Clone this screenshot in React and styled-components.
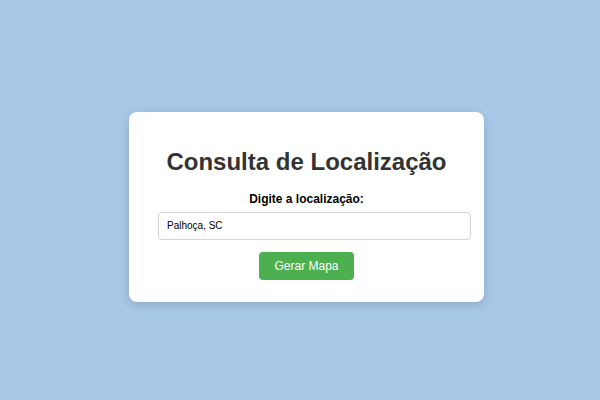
import styled, { createGlobalStyle } from "styled-components";

const GlobalStyle = createGlobalStyle`
    html, body {
        margin: 0;
        height: 100%;
        overflow: hidden;
    }
    body {
        background: #a7c7e7;
        font-family: "Liberation Sans", Arial, sans-serif;
    }
    #root {
        height: 100%;
    }
`;

const Page = styled.div`
    display: flex;
    align-items: center;
    justify-content: center;
    height: 100%;
    padding: 13px 0 0 13px;
    box-sizing: border-box;
`;

const Card = styled.div`
    width: 295px;
    padding: 20px 30px 22px;
    background: #fff;
    border-radius: 8px;
    box-shadow: 0 3px 10px rgba(0, 0, 0, 0.14);
    text-align: center;
`;

const Title = styled.h1`
    margin: 16px 0;
    font-size: 24px;
    color: #333;
`;

const Label = styled.label`
    display: block;
    margin-bottom: 6px;
    font-size: 12px;
    font-weight: bold;
    color: #000;
`;

const Input = styled.input`
    display: block;
    width: 100%;
    height: 26px;
    padding: 0 8px;
    margin: 0 0 12px -1px;
    border: 1px solid #d4d4d4;
    border-radius: 4px;
    font-family: inherit;
    font-size: 10px;
    color: #000;
    outline: none;
`;

const Button = styled.button`
    display: block;
    height: 28px;
    margin: 0 auto;
    padding: 0 15px;
    border: none;
    border-radius: 4px;
    background: #4caf50;
    color: #fff;
    font-family: inherit;
    font-size: 12px;
    cursor: pointer;
`;

export default function App() {
    return (
        <>
            <GlobalStyle />
            <Page>
                <Card>
                    <Title>Consulta de Localização</Title>
                    <Label htmlFor="local">Digite a localização:</Label>
                    <Input id="local" type="text" defaultValue="Palhoça, SC" />
                    <Button>Gerar Mapa</Button>
                </Card>
            </Page>
        </>
    );
}
